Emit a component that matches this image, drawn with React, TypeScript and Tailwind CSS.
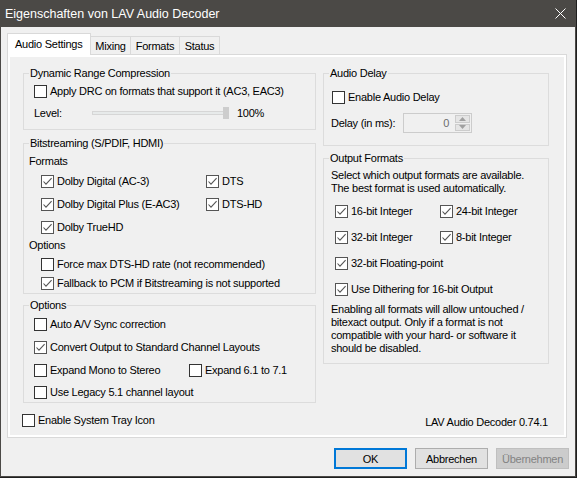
import React from 'react';

function CheckBox({ checked = false }: { checked?: boolean }) {
  return (
    <span
      className={`flex h-[13px] w-[13px] shrink-0 items-center justify-center border bg-white ${
        checked ? 'border-[#555555]' : 'border-[#333333]'
      }`}
    >
      {checked && (
        <svg width="11" height="11" viewBox="0 0 11 11">
          <path d="M1.5 5.5L4 8.2L9.6 2.2" fill="none" stroke="#555555" strokeWidth="1.1" />
        </svg>
      )}
    </span>
  );
}

function Check({ label, checked = false, className = '' }: { label: string; checked?: boolean; className?: string }) {
  return (
    <label className={`flex h-[16px] items-center gap-[3px] ${className}`}>
      <CheckBox checked={checked} />
      <span className="whitespace-nowrap">{label}</span>
    </label>
  );
}

function Group({ title, children, className = '' }: { title: string; children: React.ReactNode; className?: string }) {
  return (
    <fieldset className={`border border-[#dcdcdc] ${className}`}>
      <legend className="ml-[5px] px-[1px] leading-[14px]">{title}</legend>
      {children}
    </fieldset>
  );
}

function Tab({ label, selected = false, className = '' }: { label: string; selected?: boolean; className?: string }) {
  return selected ? (
    <div
      className={`relative z-10 -mb-px flex h-[22px] items-start border border-b-0 border-[#d9d9d9] bg-white pt-[3px] pl-[7px] ${className}`}
    >
      {label}
    </div>
  ) : (
    <div className={`flex h-[18px] items-center justify-center border-t border-r border-[#d9d9d9] bg-[#f0f0f0] ${className}`}>
      {label}
    </div>
  );
}

export default function App() {
  return (
    <div className="h-[478px] w-[577px] overflow-hidden bg-[#1f1f1f] font-['Liberation_Sans',Arial,sans-serif] text-[11px] leading-[14px] tracking-[-0.25px] text-black">
      <div className="flex h-[477px] w-[576px] flex-col border border-t-0 border-[#4b4946] bg-[#f0f0f0]">
        {/* Title bar */}
        <div className="-mx-px flex h-[27px] shrink-0 items-center justify-between bg-[#4b4946] pl-[5px] pr-[10px] text-[12.5px] tracking-normal text-white">
          <span>Eigenschaften von LAV Audio Decoder</span>
          <svg width="11" height="11" viewBox="0 0 11 11">
            <path d="M0.5 0.5L10.5 10.5M10.5 0.5L0.5 10.5" stroke="#ffffff" strokeWidth="1" />
          </svg>
        </div>

        {/* Tabs */}
        <div className="flex h-[21px] items-end pl-[6px] mt-[6px]">
          <Tab label="Audio Settings" selected className="w-[84px]" />
          <Tab label="Mixing" className="w-[40px]" />
          <Tab label="Formats" className="w-[49px]" />
          <Tab label="Status" className="w-[40px]" />
        </div>

        {/* Tab panel */}
        <div className="ml-[6px] h-[384px] w-[560px] border border-[#d9d9d9] bg-white p-[2px]">
          <div className="flex h-full gap-[7px] bg-[#f0f0f0] pt-[9px] pl-[13px] pb-[6px]">
            {/* Left column */}
            <div className="flex w-[293px] flex-col">
              <Group title="Dynamic Range Compression">
                <div className="flex flex-col gap-[6px] pt-[3px] pb-[8px] pl-[10px]">
                  <Check label="Apply DRC on formats that support it (AC3, EAC3)" />
                  <div className="flex h-[16px] items-center">
                    <span className="w-[58px]">Level:</span>
                    <div className="relative flex h-[16px] w-[137px] items-center">
                      <div className="h-[4px] w-[134px] border border-[#d6d6d6] bg-[#e7eaea]" />
                      <div className="absolute top-[2px] left-[131px] h-[12px] w-[6px] bg-[#cdcdcd]" />
                    </div>
                    <span className="ml-[8px]">100%</span>
                  </div>
                </div>
              </Group>

              <Group title="Bitstreaming (S/PDIF, HDMI)" className="mt-[6px]">
                <div className="flex flex-col pt-[4px] pb-[2px] pl-[5px]">
                  <div className="h-[14px]">Formats</div>
                  <div className="mt-[5px] grid grid-cols-[165px_auto] gap-y-[7px] pl-[12px]">
                    <Check label="Dolby Digital (AC-3)" checked />
                    <Check label="DTS" checked />
                    <Check label="Dolby Digital Plus (E-AC3)" checked />
                    <Check label="DTS-HD" checked />
                    <Check label="Dolby TrueHD" checked />
                  </div>
                  <div className="mt-[3px] h-[14px]">Options</div>
                  <div className="flex flex-col gap-[3px] pl-[12px] mt-[4px]">
                    <Check label="Force max DTS-HD rate (not recommended)" />
                    <Check label="Fallback to PCM if Bitstreaming is not supported" checked />
                  </div>
                </div>
              </Group>

              <Group title="Options" className="mt-[4px]">
                <div className="flex flex-col gap-[7px] pt-[4px] pb-[2px] pl-[10px]">
                  <Check label="Auto A/V Sync correction" />
                  <Check label="Convert Output to Standard Channel Layouts" checked />
                  <div className="flex">
                    <Check label="Expand Mono to Stereo" className="w-[155px]" />
                    <Check label="Expand 6.1 to 7.1" />
                  </div>
                  <Check label="Use Legacy 5.1 channel layout" className="-mt-px" />
                </div>
              </Group>

              <Check label="Enable System Tray Icon" className="mt-[9px] -ml-px" />
            </div>

            {/* Right column */}
            <div className="flex w-[226px] flex-col">
              <Group title="Audio Delay">
                <div className="flex flex-col pt-[9px] pb-[12px] pl-[8px]">
                  <Check label="Enable Audio Delay" />
                  <div className="mt-[8px] flex h-[20px] items-center">
                    <span className="-ml-px w-[72px]">Delay (in ms):</span>
                    <div className="flex h-[20px] w-[69px] border border-[#cccccc] bg-[#f0f0f0]">
                      <span className="flex-1 pr-[6px] text-right leading-[18px] text-[#6d6d6d]">0</span>
                      <div className="flex w-[16px] flex-col gap-px py-px pr-px">
                        <div className="flex flex-1 items-center justify-center border border-[#cccccc] bg-[#e5e5e5]">
                          <svg width="7" height="4" viewBox="0 0 7 4">
                            <path d="M0 4L3.5 0L7 4Z" fill="#a0a0a0" />
                          </svg>
                        </div>
                        <div className="flex flex-1 items-center justify-center border border-[#cccccc] bg-[#e5e5e5]">
                          <svg width="7" height="4" viewBox="0 0 7 4">
                            <path d="M0 0L3.5 4L7 0Z" fill="#a0a0a0" />
                          </svg>
                        </div>
                      </div>
                    </div>
                  </div>
                </div>
              </Group>

              <Group title="Output Formats" className="mt-[5px]">
                <div className="flex flex-col pt-[4px] pb-[8px] pl-[7px] leading-[13px]">
                  <p>
                    Select which output formats are available.
                    <br />
                    The best format is used automatically.
                  </p>
                  <div className="mt-[8px] grid grid-cols-[105px_auto] gap-y-[10px] pl-[4px] leading-[14px]">
                    <Check label="16-bit Integer" checked />
                    <Check label="24-bit Integer" checked />
                    <Check label="32-bit Integer" checked />
                    <Check label="8-bit Integer" checked />
                    <Check label="32-bit Floating-point" checked className="col-span-2" />
                    <Check label="Use Dithering for 16-bit Output" checked className="col-span-2" />
                  </div>
                  <p className="mt-[6px]">
                    Enabling all formats will allow untouched /
                    <br />
                    bitexact output. Only if a format is not
                    <br />
                    compatible with your hard- or software it
                    <br />
                    should be disabled.
                  </p>
                </div>
              </Group>

              <div className="mt-auto pr-px text-right">LAV Audio Decoder 0.74.1</div>
            </div>
          </div>
        </div>

        {/* Dialog buttons */}
        <div className="mt-[10px] flex justify-end gap-[8px] pr-[6px]">
          <button className="h-[21px] w-[73px] border-2 border-[#0078d7] bg-[#e1e1e1]">OK</button>
          <button className="h-[21px] w-[73px] border border-[#adadad] bg-[#e1e1e1]">Abbrechen</button>
          <button className="h-[21px] w-[73px] border border-[#bfbfbf] bg-[#cccccc] text-[#838383]">Übernehmen</button>
        </div>
      </div>
    </div>
  );
}
